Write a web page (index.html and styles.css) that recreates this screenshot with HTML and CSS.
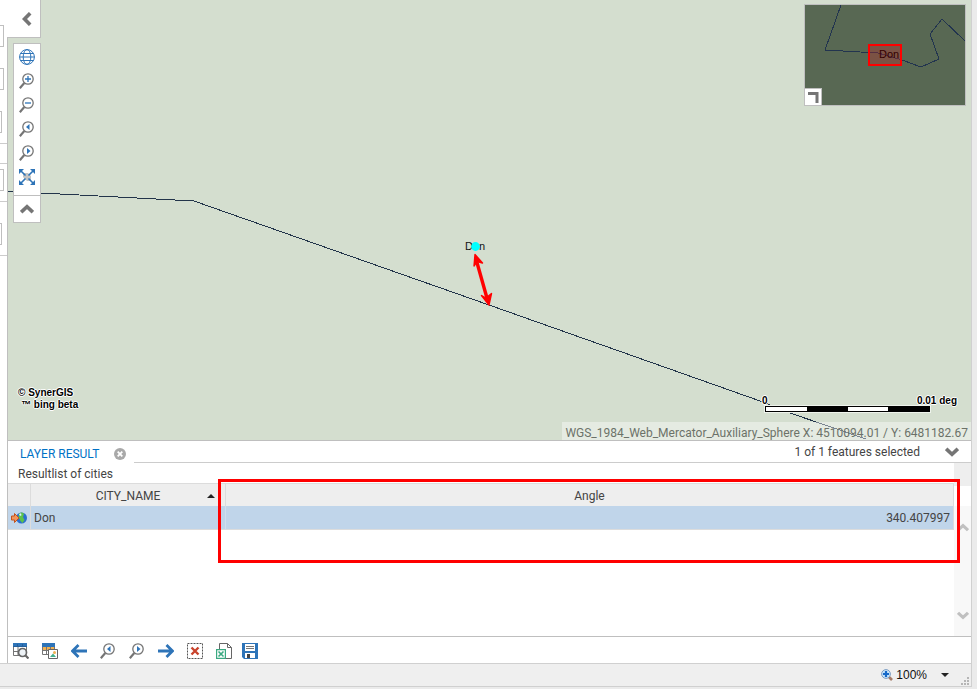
FILE: index.html
```html
<!DOCTYPE html>
<html lang="en">
<head>
<meta charset="utf-8">
<title>Layer result</title>
<link rel="stylesheet" href="styles.css">
</head>
<body>
<svg class="defs" aria-hidden="true">
  <symbol id="lens" viewBox="0 0 16 16">
    <circle cx="9" cy="6" r="5.2" fill="#fff" stroke="#757575" stroke-width="1.3"/>
    <path d="M5.3 10 0.8 15.2" stroke="#757575" stroke-width="2.2" fill="none"/>
  </symbol>
  <symbol id="lens-prev" viewBox="0 0 16 16">
    <use href="#lens"/><path d="M10.5 3v6L7 6z" fill="#2e74b8"/>
  </symbol>
  <symbol id="lens-next" viewBox="0 0 16 16">
    <use href="#lens"/><path d="M8 3v6L11.5 6z" fill="#2e74b8"/>
  </symbol>
  <symbol id="chevron" viewBox="0 0 14 10">
    <path d="M1.2 1.8 7 7.2 12.8 1.8" fill="none" stroke="currentColor" stroke-width="3.6"/>
  </symbol>
</svg>
<div class="window">
  <div class="workspace">
    <aside class="sidebar">
      <span class="field"></span>
      <span class="field"></span>
      <span class="field short"></span>
      <span class="group"></span>
      <span class="group open"><span class="field"></span></span>
      <span class="group tall"><span class="field short"></span></span>
    </aside>
    <main class="main">
      <section class="map">
        <svg class="layer" aria-hidden="true">
          <polyline points="0,191 5,191 33,193 186,201 481,305 755,402 779,412 858,439" fill="none" stroke="#22344a" shape-rendering="crispEdges"/>
          <path d="M468 259 479.500 300" stroke="#f00" stroke-width="3.4"/>
          <path d="M467 254.500 474.500 263 469 261.500 466 266 Z M481 305 473.500 295.500 478 298 483.500 293.500Z" fill="#f00" stroke="#f00" stroke-width="1.400" stroke-linejoin="round"/>
          <text class="place" x="457" y="250">Don</text>
          <circle cx="467.500" cy="246.500" r="4.400" fill="#0ff"/>
        </svg>
        <button class="collapse" aria-label="Collapse panel">
          <svg width="10" height="14" viewBox="0 0 10 14"><path d="M8.200 1.200 2.500 7l5.700 5.800" fill="none" stroke="#757575" stroke-width="3.600"/></svg>
        </button>
        <nav class="tools">
          <div class="tools-list">
            <button aria-label="Full view"><svg width="16" height="16" viewBox="0 0 16 16" fill="none" stroke="#2e74b8"><circle cx="8" cy="8" r="7.400"/><ellipse cx="8" cy="8" rx="3.800" ry="7.400"/><path d="M1.800 4.500h12.400M.5 8h15M1.800 11.500h12.400"/></svg></button>
            <button aria-label="Zoom in"><svg width="16" height="16"><use href="#lens"/><path d="M6 6h6M9 3v6" stroke="#2e74b8" stroke-width="1.300"/></svg></button>
            <button aria-label="Zoom out"><svg width="16" height="16"><use href="#lens"/><path d="M6 6h6" stroke="#2e74b8" stroke-width="1.300"/></svg></button>
            <button aria-label="Previous extent"><svg width="16" height="16"><use href="#lens-prev"/></svg></button>
            <button aria-label="Next extent"><svg width="16" height="16"><use href="#lens-next"/></svg></button>
            <button aria-label="Zoom to selection"><svg width="16" height="16" viewBox="0 0 16 16"><path d="M4 4h5l3 3v5H8L4 8z" fill="#c4c4c4"/><path d="M1.500 1.500l5 5M14.500 1.500l-5 5M1.500 14.500l5-5M14.500 14.500l-5-5" stroke="#2e74b8" stroke-width="1.600"/><path d="M0 0h5L0 5zM16 0h-5l5 5zM0 16h5l-5-5zM16 16h-5l5-5z" fill="#2e74b8"/></svg></button>
          </div>
          <button class="fold" aria-label="Fold tools"><svg class="up" width="14" height="10"><use href="#chevron"/></svg></button>
        </nav>
        <div class="overview">
          <svg width="160" height="100" viewBox="0 0 160 100">
            <g fill="none" stroke="#22344f" shape-rendering="crispEdges"><path d="M36 0 20 45 73 48 97 55 116 62 134 54 125 29 137 14 160 36"/></g>
            <rect x="64" y="40" width="32" height="20" fill="#c22" fill-opacity=".3" stroke="#f00" stroke-width="2"/>
            <text class="place" x="74" y="53">Don</text>
          </svg>
          <button class="corner" aria-label="Hide overview"><svg width="12" height="12"><path d="M1 2.500h9V12" fill="none" stroke="#757575" stroke-width="3"/></svg></button>
        </div>
        <p class="copyright">© SynerGIS<br><span>™ bing beta</span></p>
        <div class="scale">
          <div class="scale-labels"><span>0</span><span>0.01 deg</span></div>
          <div class="scale-bar"><i></i><i></i><i></i><i></i></div>
        </div>
        <div class="coords">WGS_1984_Web_Mercator_Auxiliary_Sphere X: 4510094.01 / Y: 6481182.67</div>
      </section>
      <section class="results">
        <header class="tabs">
          <div class="tab">
            <a href="#result">LAYER RESULT</a>
            <button aria-label="Close tab"><svg width="12" height="12"><circle cx="6" cy="6" r="6" fill="#a9a9a9"/><path d="M3.700 3.700l4.600 4.600M8.300 3.700 3.700 8.300" stroke="#fff" stroke-width="1.800"/></svg></button>
          </div>
          <div class="tab-rest">
            <span>1 of 1 features selected</span>
            <button aria-label="Minimize results"><svg width="14" height="10"><use href="#chevron"/></svg></button>
          </div>
        </header>
        <div class="body" id="result">
          <div class="grid">
            <h2>Resultlist of cities</h2>
            <table>
              <colgroup><col class="c-icon"><col class="c-name"><col></colgroup>
              <thead><tr><th></th><th>CITY_NAME<svg class="sort" width="8" height="4"><path d="M0 4 4 0l4 4z" fill="#222"/></svg></th><th>Angle</th></tr></thead>
              <tbody><tr>
                <td><svg class="goto" width="16" height="12" viewBox="0 0 16 12"><circle cx="10.500" cy="6" r="5.500" fill="#2b6fd0"/><path d="M8 1.500c2-1.500 4-1 5 .5l-1 3 1.500 3-2 3-2-2-2-4z" fill="#5cc24a"/><path d="M8 2l2-.8.5 2L9 4z" fill="#d5f0ff"/><path d="M.5 4h3V1.500L8 6l-4.500 4.500V8h-3z" fill="#f2955a" stroke="#c4521d"/></svg></td>
                <td>Don</td><td>340.407997</td>
              </tr></tbody>
            </table>
          </div>
          <div class="scroll">
            <span class="scroll-head"></span>
            <div class="scroll-track">
              <svg class="up" width="12" height="9"><use href="#chevron"/></svg>
              <svg width="12" height="9"><use href="#chevron"/></svg>
            </div>
          </div>
        </div>
        <div class="callout"></div>
        <footer class="actions">
          <button aria-label="Show details"><svg width="16" height="16" viewBox="0 0 16 16"><path d="M0 0h14v4H0z" fill="#2e74b8"/><path d="M.5 4v8.500H6M.5 8.500H6M5 4v8M13.500 4v4" stroke="#757575" fill="none"/><path d="M0 3.500h14M4.500 1v3M9.500 1v3" stroke="#265f9b"/><circle cx="9.500" cy="9.500" r="4" fill="#eef3f7" stroke="#666" stroke-width="1.700"/><path d="M12.300 12.300 15.500 15.500" stroke="#666" stroke-width="2.200"/></svg></button>
          <button aria-label="Show on map"><svg width="16" height="16" viewBox="0 0 16 16"><path d="M0 0h13v4H0z" fill="#2e74b8"/><path d="M1 4h12v3H1z" fill="#f0b050"/><path d="M.5 4v7.500H6M.5 7.500H6M4.500 4v7M8.500 4v3M12.500 4v3" stroke="#757575" fill="none"/><path d="M6.500 6.500h9v9h-9z" fill="#fff" stroke="#666"/><path d="M8 14l3-3.500 3 3.500z" fill="#45b08c"/><circle cx="12.500" cy="9.500" r="1.500" fill="#f0b050"/></svg></button>
          <button aria-label="Previous"><svg width="16" height="16"><path d="M16 8H2M7.500 2 1.500 8l6 6" fill="none" stroke="#2e74b8" stroke-width="2.800"/></svg></button>
          <button aria-label="Previous zoom"><svg width="16" height="16"><use href="#lens-prev"/></svg></button>
          <button aria-label="Next zoom"><svg width="16" height="16"><use href="#lens-next"/></svg></button>
          <button aria-label="Next"><svg width="16" height="16"><path d="M0 8h14M8.500 2l6 6-6 6" fill="none" stroke="#2e74b8" stroke-width="2.800"/></svg></button>
          <button aria-label="Clear selection"><svg width="16" height="16"><path d="M.5.5h15v15H.5z" fill="none" stroke="#555" stroke-dasharray="2 1"/><path d="M4.500 4.500l7 7M11.500 4.500l-7 7" stroke="#c9432c" stroke-width="2.400"/></svg></button>
          <button aria-label="Export to Excel"><svg width="16" height="16"><path d="M3.500 6V.5h8l4 4v11H10M11.500.5v4h4" fill="none" stroke="#666"/><path d="M.6 6.600h8.800v8.800H.6z" fill="#fff" stroke="#3aa981" stroke-width="1.200"/><path d="M2.500 8.500l5 5M7.500 8.500l-5 5" stroke="#3aa981" stroke-width="1.600"/></svg></button>
          <button class="save" aria-label="Save"><svg width="16" height="16"><path d="M0 0h16v16H2l-2-2z" fill="#2e74b8"/><path d="M3 1h10v7H3z" fill="#fff"/><path d="M4 3.500h8M4 5.500h8" stroke="#777"/><path d="M3 10h10v5H3z" fill="#fff"/><path d="M5 11h3v4H5z" fill="#444"/></svg></button>
        </footer>
      </section>
    </main>
  </div>
  <div class="status">
    <button class="zoom-level"><svg width="12" height="12"><path d="M7.500 7.500 11 11" stroke="#a67c68" stroke-width="2.600"/><circle cx="5" cy="5" r="4.400" fill="#c5e3fa" stroke="#7d9cc0"/><path d="M2 5h6M5 2v6" stroke="#1669c9" stroke-width="2.200"/></svg>100%<svg class="drop" width="8" height="4"><path d="M0 0h8L4 4z" fill="#222"/></svg></button>
    <svg class="grip" width="8" height="8" fill="#b5b5b5"><path d="M6 0h2v2H6zM3 3h2v2H3zM6 3h2v2H6zM0 6h2v2H0zM3 6h2v2H3zM6 6h2v2H6z"/></svg>
  </div>
</div>
</body>
</html>
```
FILE: styles.css
```css
* { box-sizing: border-box; }
body { margin: 0; background: #ebebeb; color: #444; font: 12px/16px Roboto, "Open Sans", sans-serif; }
button { margin: 0; padding: 0; border: 0; background: none; font: inherit; color: inherit; display: flex; align-items: center; justify-content: center; }
svg { display: block; flex: none; }
.defs { position: absolute; width: 0; height: 0; }
.up { transform: rotate(180deg); }

.window { display: flex; flex-direction: column; height: 100vh; padding: 0 5px 2px 0; }
.workspace { flex: 1; min-height: 0; display: flex; border-right: 1px solid #d0d0d0; background: #fff; }
.main { flex: 1; min-width: 0; display: flex; flex-direction: column; }

.sidebar { width: 8px; border-right: 1px solid #bfbfbf; display: flex; flex-direction: column; padding-top: 25px; }
.field { display: block; width: 4px; height: 22px; margin-bottom: 21px; border: 1px solid #bfbfbf; border-left: 0; }
.field.short { width: 2px; }
.sidebar > .short { margin-bottom: 10px; }
.group { height: 20px; border-top: 1px solid #ccc; }
.group.open { height: 38px; padding-top: 5px; }
.group.tall { height: 55px; padding-top: 21px; border-bottom: 1px solid #ccc; }

.map { flex: 1; min-height: 0; position: relative; background: #d4decf; }
.layer { position: absolute; inset: 0; width: 100%; height: 100%; }
.place { font: 11px "Liberation Sans", sans-serif; fill: #111; }
.collapse { position: absolute; top: 0; left: -1px; width: 34px; height: 38px; padding-left: 6px; background: #fff; border: solid #bfbfbf; border-width: 0 1px 1px 0; }
.tools { position: absolute; top: 43px; left: 5px; width: 28px; background: #fff; border: 1px solid #bfbfbf; }
.tools-list { display: flex; flex-direction: column; align-items: center; gap: 8px; padding: 5px 0 10px; }
.fold { width: 100%; height: 27px; border-top: 1px solid #bfbfbf; color: #757575; }

.overview { position: absolute; top: 4px; right: 5px; border: 1px solid #bfbfbf; background: #586853; }
.overview .place { fill: #300; }
.corner { position: absolute; left: -1px; bottom: -1px; width: 18px; height: 18px; background: #fff; border: 1px solid #bfbfbf; }
.copyright, .scale { font: bold 10px/12px "Liberation Sans", sans-serif; color: #000; text-shadow: 1px 0 #fff, -1px 0 #fff, 0 1px #fff, 0 -1px #fff; }
.copyright { position: absolute; left: 10px; bottom: 29px; margin: 0; }
.copyright span { margin-left: 3px; }
.scale { position: absolute; right: 14px; bottom: 28px; width: 195px; }
.scale-labels { display: flex; justify-content: space-between; height: 11px; }
.scale-bar { display: flex; width: 165px; height: 6px; margin-left: 3px; border: 1px solid #000; background: #fff; box-shadow: 0 0 0 1px #eef3ec; }
.scale-bar i { flex: 1; }
.scale-bar i:nth-child(even) { background: #000; }
.coords { position: absolute; right: 0; bottom: 0; height: 18px; padding: 3px 3px 0; background: rgba(255, 255, 255, .4); color: #6c7269; white-space: nowrap; }

.results { position: relative; display: flex; flex-direction: column; height: 223px; border-top: 1px solid #bfbfbf; }
.tabs { display: flex; height: 22px; }
.tab { display: flex; align-items: center; gap: 15px; padding: 3px 8px 0 12px; }
.tab a { color: #0072c6; text-decoration: none; }
.tab-rest { flex: 1; display: flex; align-items: center; justify-content: flex-end; gap: 25px; padding: 1px 12px 0 0; border-bottom: 1px solid #ccc; }
.tab-rest button { color: #757575; }
.body { flex: 1; min-height: 0; display: flex; }
.grid { flex: 1; min-width: 0; }
h2 { margin: 0; height: 20px; padding: 3px 10px 0; font-size: 12px; font-weight: normal; }
table { width: 100%; table-layout: fixed; border-collapse: separate; border-spacing: 0; }
.c-icon { width: 23px; }
.c-name { width: 195px; }
th { height: 23px; padding: 1px 0 0; position: relative; font-weight: normal; background: #eee; border: solid #dcdcdc; border-width: 1px 1px 0 0; }
.sort { position: absolute; right: 10px; top: 10px; }
td { height: 24px; padding: 1px 3px 0; background: #c0d5ea; border: solid #dcdcdc; border-width: 0 1px 1px 0; }
td:nth-child(2) { border-right-color: #d0dfee; }
td:last-child { text-align: right; }
.goto { margin-left: 0; }
.scroll { width: 17px; display: flex; flex-direction: column; }
.scroll-head { height: 23px; margin-bottom: 20px; background: #eee; }
.scroll-track { flex: 1; display: flex; flex-direction: column; justify-content: space-between; align-items: center; padding: 17px 0 16px; background: #f8f8f8; color: #c0c0c0; }
.callout { position: absolute; left: 210px; right: 11px; top: 38px; height: 84px; border: 3px solid #f00; pointer-events: none; }
.actions { display: flex; gap: 13px; height: 27px; padding: 6px 5px 4px; border-top: 1px solid #bfbfbf; }
.save { margin-left: -3px; }

.status { display: flex; justify-content: flex-end; align-items: center; gap: 12px; height: 24px; padding-right: 2px; background: #efefef; border: solid #d0d0d0; border-width: 1px 1px 1px 0; }
.zoom-level { gap: 3px; font: 12px "Liberation Sans", sans-serif; color: #111; }
.drop { margin-left: 11px; }
.grip { align-self: flex-end; margin-bottom: 1px; }
```
